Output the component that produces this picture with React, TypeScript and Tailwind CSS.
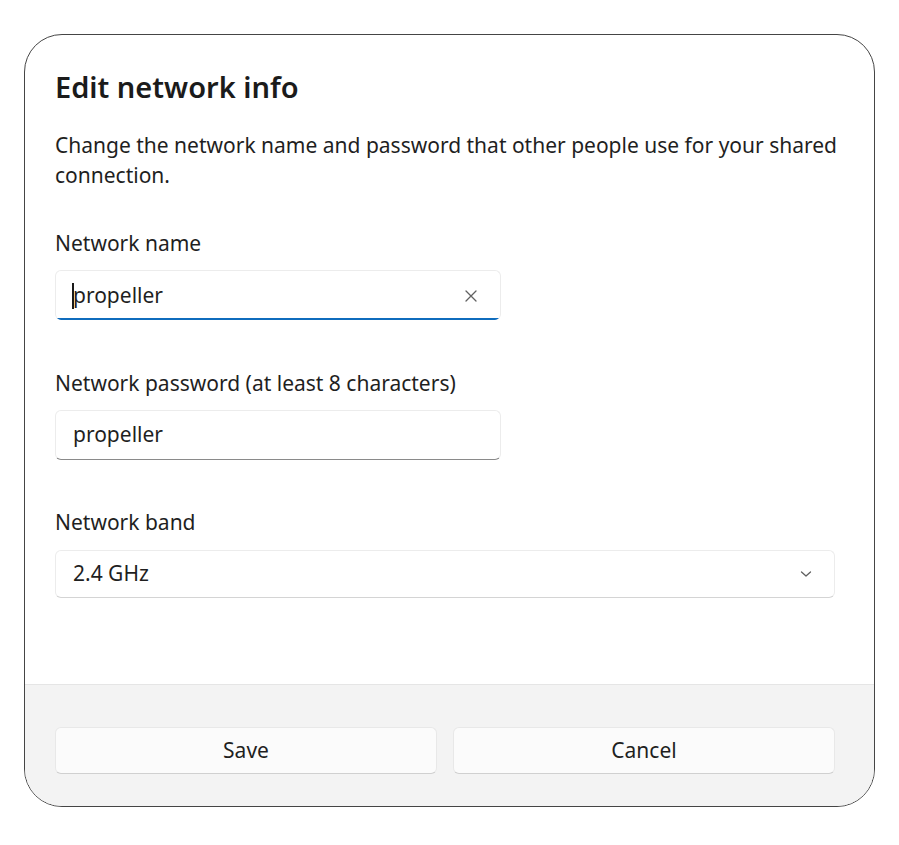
import React from "react";

const font = { fontFamily: '"Noto Sans", "Open Sans", sans-serif' };

export default function App() {
  return (
    <div className="w-[899px] h-[845px] bg-white text-[#1b1b1b]" style={font}>
      <div className="pt-[34px] pl-[24px]">
        <div className="w-[851px] h-[773px] border border-[#454545] rounded-[38px] overflow-hidden flex flex-col bg-white">
          <div className="flex-1 pl-[30px] pr-[38px] pt-[34px]">
            <h1 className="text-[29px] leading-[36px] font-semibold text-[#1b1b1b]">Edit network info</h1>
            <p className="mt-[25px] -mr-[14px] text-[21px] leading-[30px] text-[#1f1f1f]">
              Change the network name and password that other people use for your shared connection.
            </p>

            <div className="mt-[39px] text-[21px] leading-[28px] text-[#1f1f1f]">Network name</div>
            <div className="mt-[13px] w-[446px] h-[50px] rounded-[6px] border border-[#ececec] border-b-0 bg-white relative overflow-hidden flex items-center pl-[17px] pr-[20px]">
              <span className="w-[2px] h-[26px] bg-[#1a1a1a] -ml-[1px] mr-[-1px]"></span>
              <span className="text-[21px] text-[#1f1f1f] flex-1">propeller</span>
              <svg width="14" height="14" viewBox="0 0 14 14" className="mr-[2px]">
                <path d="M2 2 L12 12 M12 2 L2 12" stroke="#616161" strokeWidth="1.3" strokeLinecap="round" />
              </svg>
              <div className="absolute left-0 right-0 bottom-0 h-[2px] bg-[#0f6cbd]"></div>
            </div>

            <div className="mt-[49px] text-[21px] leading-[28px] text-[#1f1f1f]">Network password (at least 8 characters)</div>
            <div className="mt-[13px] w-[446px] h-[50px] rounded-[6px] border border-[#ececec] border-b-[#8a8a8a] bg-white flex items-center pl-[17px]">
              <span className="text-[21px] text-[#1f1f1f]">propeller</span>
            </div>

            <div className="mt-[48px] text-[21px] leading-[28px] text-[#1f1f1f]">Network band</div>
            <div className="mt-[14px] w-[780px] h-[48px] rounded-[6px] border border-[#ececec] border-b-[#d4d4d4] bg-white flex items-center pl-[17px] pr-[22px]">
              <span className="text-[21px] text-[#1f1f1f] flex-1">2.4 GHz</span>
              <svg width="12" height="8" viewBox="0 0 12 8">
                <path d="M1.5 2 L6 6 L10.5 2" fill="none" stroke="#5f5f5f" strokeWidth="1.3" strokeLinecap="round" strokeLinejoin="round" />
              </svg>
            </div>
          </div>

          <div className="h-[122px] bg-[#f3f3f3] border-t border-[#e5e5e5] pl-[30px] pr-[38px] pt-[42px] flex gap-[16px]">
            <button className="w-[382px] h-[47px] rounded-[6px] bg-[#fbfbfb] border border-[#e8e8e8] border-b-[#d0d0d0] text-[21px] text-[#1f1f1f]">Save</button>
            <button className="w-[382px] h-[47px] rounded-[6px] bg-[#fbfbfb] border border-[#e8e8e8] border-b-[#d0d0d0] text-[21px] text-[#1f1f1f]">Cancel</button>
          </div>
        </div>
      </div>
    </div>
  );
}
